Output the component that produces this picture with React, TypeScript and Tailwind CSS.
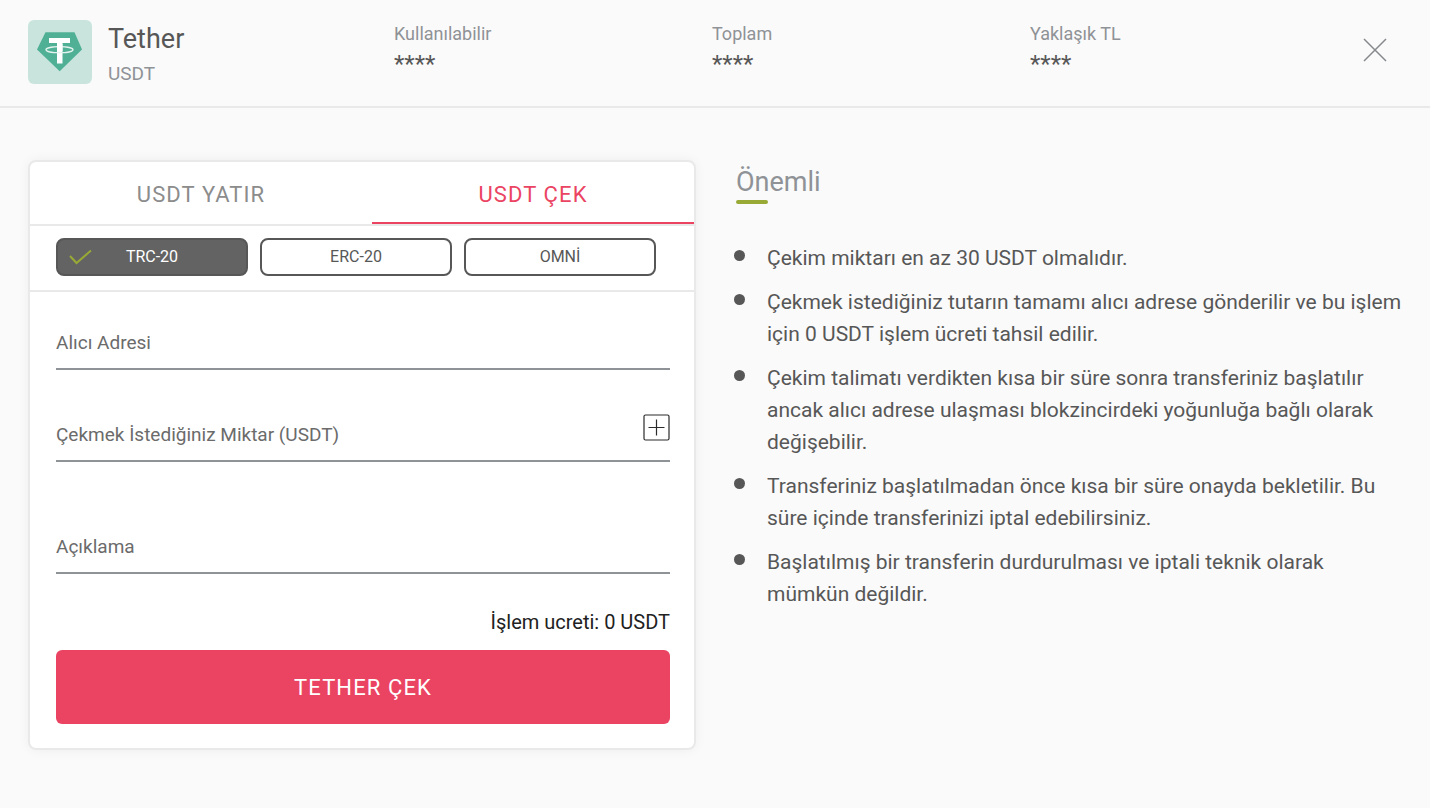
import React, { useState } from "react";

const balances = [
  { label: "Kullanılabilir", value: "****" },
  { label: "Toplam", value: "****" },
  { label: "Yaklaşık TL", value: "****" },
];

const networks = ["TRC-20", "ERC-20", "OMNİ"];

const notes = [
  "Çekim miktarı en az 30 USDT olmalıdır.",
  "Çekmek istediğiniz tutarın tamamı alıcı adrese gönderilir ve bu işlem için 0 USDT işlem ücreti tahsil edilir.",
  "Çekim talimatı verdikten kısa bir süre sonra transferiniz başlatılır ancak alıcı adrese ulaşması blokzincirdeki yoğunluğa bağlı olarak değişebilir.",
  "Transferiniz başlatılmadan önce kısa bir süre onayda bekletilir. Bu süre içinde transferinizi iptal edebilirsiniz.",
  "Başlatılmış bir transferin durdurulması ve iptali teknik olarak mümkün değildir.",
];

function TetherLogo() {
  return (
    <svg viewBox="0 0 64 64" className="w-16 h-16 shrink-0" aria-hidden="true">
      <rect width="64" height="64" rx="6" fill="#c9e4dc" />
      <path d="M17.5 12.3h29l7.500 17.200L31.700 51.300 9 29.500z" fill="#4fb096" />
      <path d="M21 18h21v5H34.500v20.500h-5.500V23H21z" fill="#fff" />
      <ellipse cx="31.500" cy="29.700" rx="13.500" ry="3" fill="none" stroke="#e4f3ee" strokeWidth="1.300" />
      <path d="M29 24h5.500v7H29z" fill="#fff" />
    </svg>
  );
}

interface FieldProps {
  id: string;
  label: string;
  className?: string;
  children?: React.ReactNode;
}

function Field({ id, label, className = "", children }: FieldProps) {
  return (
    <div className={`relative flex items-center h-[54px] border-b-2 border-[#8f9296] ${className}`}>
      <input
        id={id}
        type="text"
        placeholder=" "
        className="peer flex-1 min-w-0 h-full bg-transparent text-[19px] text-[#575757] focus:outline-none"
      />
      {/* Label sits over the empty input */}
      <label
        htmlFor={id}
        className="absolute left-0 top-0 leading-[54px] text-[19px] text-[#6b6b6b] cursor-text peer-[:not(:placeholder-shown)]:hidden"
      >
        {label}
      </label>
      {children}
    </div>
  );
}

export default function App() {
  const [tab, setTab] = useState("cek");
  const [network, setNetwork] = useState("TRC-20");

  const tabClass = (active: boolean) =>
    `h-[62px] pt-1 border-b-2 text-[22px] tracking-wider cursor-pointer ${
      active ? "text-[#eb4463] border-[#eb4463]" : "text-[#8c8c8c] border-transparent"
    }`;

  return (
    <div className="min-h-screen bg-[#fafafa] text-[#575757] font-[Roboto,sans-serif]">
      {/* Header */}
      <header className="flex items-start px-7 pt-5 pb-4 border-b-2 border-[#e9e9e9]">
        <div className="flex gap-4 w-[366px]">
          <TetherLogo />
          <div>
            <h1 className="text-[27px] leading-[38px]">Tether</h1>
            <p className="text-[19px] leading-8 text-[#8f9296]">USDT</p>
          </div>
        </div>

        <dl className="flex-1 grid grid-cols-3">
          {balances.map((item) => (
            <div key={item.label}>
              <dt className="text-lg leading-7 text-[#8f9296]">{item.label}</dt>
              <dd className="text-2xl leading-8">{item.value}</dd>
            </div>
          ))}
        </dl>

        <button type="button" aria-label="Kapat" className="w-[54px] h-[60px] flex items-center justify-center cursor-pointer">
          <svg viewBox="0 0 24 24" className="w-6 h-6" fill="none" stroke="#85888c" strokeWidth="1.500">
            <path d="M1 1l22 22M23 1L1 23" />
          </svg>
        </button>
      </header>

      <main className="grid grid-cols-2 gap-[38px] items-start px-7 pt-[52px] pb-14">
        {/* Withdraw card */}
        <section className="bg-white border-2 border-[#e9e9e9] rounded-lg shadow-[0_0_12px_rgba(0,0,0,0.05)]">
          <div className="grid grid-cols-[17fr_16fr] border-b-2 border-[#e9e9e9]" role="tablist">
            <button type="button" role="tab" aria-selected={tab === "yatir"} onClick={() => setTab("yatir")} className={tabClass(tab === "yatir")}>
              USDT YATIR
            </button>
            <button type="button" role="tab" aria-selected={tab === "cek"} onClick={() => setTab("cek")} className={tabClass(tab === "cek")}>
              USDT ÇEK
            </button>
          </div>

          <div className="flex gap-3 pl-[26px] pr-6 pt-3 pb-3.5 border-b-2 border-[#e9e9e9]">
            {networks.map((name) => (
              <button
                key={name}
                type="button"
                aria-pressed={network === name}
                onClick={() => setNetwork(name)}
                className={`relative w-48 h-[38px] border-2 border-[#575757] rounded-lg text-base cursor-pointer ${
                  network === name ? "bg-[#636363] text-white" : "bg-white"
                }`}
              >
                {network === name && (
                  <svg viewBox="0 0 24 16" className="absolute left-[10px] top-[9px] w-6 h-4" fill="none" stroke="#98a936" strokeWidth="2">
                    <path d="M2 7l6.500 7L23 1.500" />
                  </svg>
                )}
                {name}
              </button>
            ))}
          </div>

          <form className="pl-[26px] pr-6 py-6" onSubmit={(e) => e.preventDefault()}>
            <Field id="address" label="Alıcı Adresi" />
            <Field id="amount" label="Çekmek İstediğiniz Miktar (USDT)" className="mt-[38px]">
              <button type="button" aria-label="Tümünü ekle" className="self-start mt-1.5 cursor-pointer">
                <svg viewBox="0 0 27 27" className="w-[27px] h-[27px]" fill="none" stroke="#2b2b2b" strokeWidth="1.200">
                  <rect x="1" y="1" width="25" height="25" rx="1.500" />
                  <path d="M13.500 5.500v16M5.500 13.500h16" />
                </svg>
              </button>
            </Field>
            <Field id="note" label="Açıklama" className="mt-[58px]" />

            <p className="mt-8 text-right text-xl leading-8 text-[#212121]">İşlem ucreti: 0 USDT</p>
            <button
              type="submit"
              className="w-full h-[74px] mt-3 rounded-md bg-[#eb4463] text-white text-[22px] tracking-wider cursor-pointer"
            >
              TETHER ÇEK
            </button>
          </form>
        </section>

        {/* Notes */}
        <aside>
          <h2 className="pl-0.5 pt-1 text-[27px] leading-9 text-[#8f9296]">Önemli</h2>
          <div className="ml-0.5 w-8 h-1 rounded-full bg-[#98a936]" />
          <ul className="mt-[38px] space-y-3">
            {notes.map((note) => (
              <li key={note} className="flex items-start gap-[22px]">
                <span className="w-[11px] h-[11px] mt-2 rounded-full bg-[#575757] shrink-0" />
                <span className="text-[21px] leading-8">{note}</span>
              </li>
            ))}
          </ul>
        </aside>
      </main>
    </div>
  );
}
